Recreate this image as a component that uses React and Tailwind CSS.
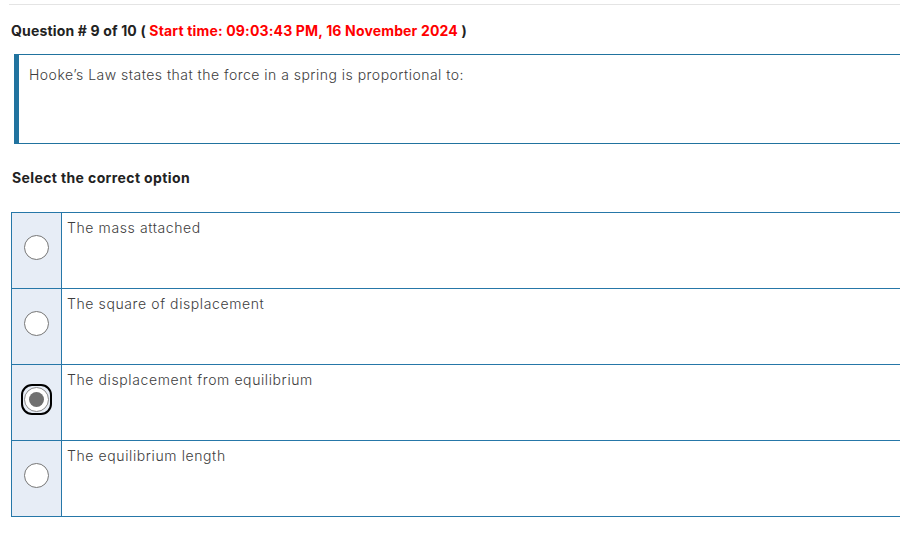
const options = [
  { id: 1, text: "The mass attached" },
  { id: 2, text: "The square of displacement" },
  { id: 3, text: "The displacement from equilibrium" },
  { id: 4, text: "The equilibrium length" },
];

function Radio({ checked }) {
  if (checked) {
    return (
      <div className="w-[31px] h-[31px] rounded-[11px] border-[2px] border-black p-[1px] flex items-center justify-center">
        <div className="w-[25px] h-[25px] rounded-full border border-[#8a8a8a] bg-white flex items-center justify-center">
          <div className="w-[15px] h-[15px] rounded-full bg-[#707070]" />
        </div>
      </div>
    );
  }
  return <div className="w-[25px] h-[25px] rounded-full border border-[#767676] bg-white" />;
}

export default function App() {
  const selected = 3;

  return (
    <div className="w-[900px] h-[538px] overflow-hidden bg-white font-['Inter',sans-serif]">
      <div className="w-[1000px] pl-[9px]">
        <div className="mt-[4px] border-t border-[#e4e4e4]" />

        <h3 className="mt-[16px] ml-[2px] text-[14px] leading-[20px] font-bold tracking-[0.16px] text-[#222]">
          Question # 9 of 10 ({" "}
          <span className="text-[#ff0000]">
            Start time: 09:03:43 PM, 16 November 2024
          </span>{" "}
          )
        </h3>

        <div className="mt-[13px] ml-[5px] h-[90px] border-l-[5px] border-t border-b border-[#21739f] pl-[10px] pt-[10px]">
          <p className="text-[14px] leading-[20px] font-light tracking-[0.48px] text-[#3d3d3d]">
            Hooke’s Law states that the force in a spring is proportional to:
          </p>
        </div>

        <h4 className="mt-[24px] ml-[3px] text-[14px] leading-[20px] font-bold tracking-[0.38px] text-[#222]">
          Select the correct option
        </h4>

        <div className="mt-[24px] ml-[2px] border-t border-l border-[#2677a8]">
          {options.map((opt) => (
            <div
              key={opt.id}
              className="flex h-[76px] border-b border-[#2677a8]"
            >
              <div className="w-[50px] shrink-0 bg-[#e7edf6] border-r border-[#2677a8] flex flex-col items-center pt-[22px]">
                <div className={opt.id === selected ? "-mt-[3px]" : ""}>
                  <Radio checked={opt.id === selected} />
                </div>
              </div>
              <div className="pl-[5px] pt-[5px] text-[14px] leading-[20px] font-light tracking-[0.6px] text-[#3d3d3d]">
                {opt.text}
              </div>
            </div>
          ))}
        </div>
      </div>
    </div>
  );
}
